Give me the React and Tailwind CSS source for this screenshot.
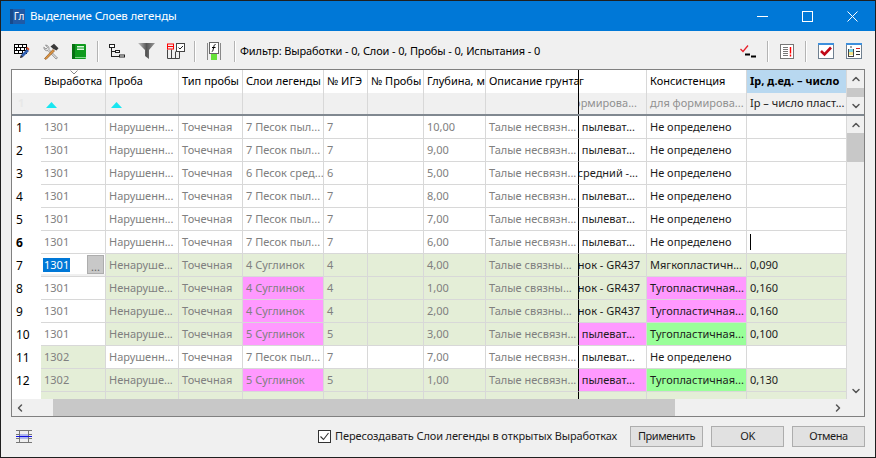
import { ChevronUp, ChevronDown, ChevronLeft, ChevronRight } from "lucide-react";

const font = "font-['Noto_Sans',sans-serif]";

const colWidths = [
  "w-[65px]",
  "w-[73px]",
  "w-[64px]",
  "w-[81px]",
  "w-[44px]",
  "w-[56px]",
  "w-[62px]",
  "w-[93px]",
  "w-[68px]",
  "w-[100px]",
  "w-[100px]",
];

const headers = [
  "Выработка",
  "Проба",
  "Тип пробы",
  "Слои легенды",
  "№ ИГЭ",
  "№ Пробы",
  "Глубина, м",
  "Описание грунта",
  "г",
  "Консистенция",
  "Ip, д.ед. – число",
];

const W = "bg-white";
const G = "bg-[#e4eed7]";
const P = "bg-[#ff99ff]";
const L = "bg-[#99ff99]";

const sand = "Нарушенн...";
const solid = "Ненаруше...";
const none = "Не определено";
const hard = "Тугопластичная...";
const melt = "Талые несвязн...";
const tied = "Талые связны...";
const dust = "Песок пылеват...";
const mid = "Песок средний -...";
const gr = "Суглинок - GR437";

const clipPad = (text) => {
  if (text === gr) return "justify-end pr-[6px]";
  if (text === mid) return "justify-end pr-[8px]";
  return "justify-end pr-[11px]";
};

const rows = [
  { n: "1", cells: ["1301", sand, "Точечная", "7 Песок пыл...", "7", "", "10,00", melt, dust, none, ""] },
  { n: "2", cells: ["1301", sand, "Точечная", "7 Песок пыл...", "7", "", "9,00", melt, dust, none, ""] },
  { n: "3", cells: ["1301", sand, "Точечная", "6 Песок сред...", "6", "", "5,00", melt, mid, none, ""] },
  { n: "4", cells: ["1301", sand, "Точечная", "7 Песок пыл...", "7", "", "8,00", melt, dust, none, ""] },
  { n: "5", cells: ["1301", sand, "Точечная", "7 Песок пыл...", "7", "", "7,00", melt, dust, none, ""] },
  { n: "6", bold: true, caret: true, cells: ["1301", sand, "Точечная", "7 Песок пыл...", "7", "", "6,00", melt, dust, none, ""] },
  {
    n: "7",
    editor: true,
    bg: [W, G, G, G, G, G, G, G, G, G, G],
    cells: ["1301", solid, "Точечная", "4 Суглинок", "4", "", "4,00", tied, gr, "Мягкопластичн...", "0,090"],
  },
  {
    n: "8",
    bg: [W, G, G, P, G, G, G, G, G, P, G],
    cells: ["1301", solid, "Точечная", "4 Суглинок", "4", "", "1,00", tied, gr, hard, "0,160"],
  },
  {
    n: "9",
    bg: [W, G, G, P, G, G, G, G, G, P, G],
    cells: ["1301", solid, "Точечная", "4 Суглинок", "4", "", "2,00", tied, gr, hard, "0,160"],
  },
  {
    n: "10",
    bg: [W, G, G, P, G, G, G, G, P, L, G],
    cells: ["1301", solid, "Точечная", "5 Суглинок", "5", "", "3,00", melt, dust, hard, "0,100"],
  },
  {
    n: "11",
    bg: [G, W, W, W, W, W, W, W, W, W, W],
    cells: ["1302", sand, "Точечная", "7 Песок пыл...", "7", "", "7,00", melt, dust, none, ""],
  },
  {
    n: "12",
    bg: [G, G, G, P, G, G, G, G, P, L, G],
    cells: ["1302", solid, "Точечная", "5 Суглинок", "5", "", "1,00", melt, dust, hard, "0,130"],
  },
];

const Separator = () => <div className="w-[2px] h-[21px] bg-[#b4b4b4] border-r border-white" />;

const BrickPencilIcon = () => (
  <svg width="16" height="16" viewBox="0 0 16 16">
    <rect x="0.5" y="1.5" width="12" height="9" fill="#fff" stroke="#000" />
    <path d="M1 4.5h11M1 7.5h11M4.5 2v2.5M8.5 2v2.5M2.5 4.5v3M6.5 4.5v3M10.5 4.5v3M4.5 7.5v3M8.5 7.5v3" stroke="#000" />
    <path d="M6 15l1-3 6-6 2 2-6 6z" fill="#2f5fb0" />
    <path d="M12 5l1.5-1 2 2-1 1.5z" fill="#d84a2a" />
    <path d="M6 15l1-3 2 2z" fill="#3a2a20" />
  </svg>
);

const ToolsIcon = () => (
  <svg width="16" height="17" viewBox="0 0 16 17">
    <path d="M14.5 15L6 6.5C6.6 4.5 5 2 2.5 2L4.5 4.5 3 6 .8 4.2C.8 6.8 3 8.2 5 7.6L13 16z" fill="#e2e2e2" stroke="#777" strokeWidth="0.7" />
    <path d="M1.5 15.5L10 6.5l1.5 1.5L3 16.5z" fill="#e0963f" stroke="#8a5520" strokeWidth="0.7" />
    <path d="M7.5 3.5L11 0.8l4.5 4.5-2 2.2-2-1-1.5-.8z" fill="#3a3a3a" />
  </svg>
);

const BookIcon = () => (
  <svg width="14" height="15" viewBox="0 0 14 15">
    <rect x="0" y="0" width="14" height="15" rx="1" fill="#0f9a1e" />
    <rect x="0" y="0" width="3" height="15" fill="#067012" />
    <rect x="5" y="2" width="7" height="4" fill="#d8f7dc" />
    <path d="M5 4h7" stroke="#0f9a1e" />
    <rect x="3" y="13" width="11" height="1" fill="#7fd98a" />
  </svg>
);

const TreeIcon = () => (
  <svg width="16" height="14" viewBox="0 0 16 14" fill="none">
    <path d="M2.5 4v9M3 7.5h3.5M3 12.5h7.5" stroke="#222" />
    <rect x="0.5" y="0.5" width="5" height="3" fill="#fff" stroke="#222" />
    <rect x="6.5" y="6.5" width="4" height="2" fill="#fff" stroke="#222" />
    <rect x="10.5" y="11" width="5" height="2" fill="#fff" stroke="#222" />
  </svg>
);

const FunnelIcon = () => (
  <svg width="17" height="16" viewBox="0 0 17 16">
    <defs>
      <linearGradient id="funnel" x1="0" x2="1" y1="0" y2="0">
        <stop offset="0" stopColor="#c4c4c4" />
        <stop offset="0.5" stopColor="#555" />
        <stop offset="1" stopColor="#999" />
      </linearGradient>
    </defs>
    <path d="M0 0h17l-6 7v9l-4-3V7z" fill="url(#funnel)" />
  </svg>
);

const ColumnCheckIcon = () => (
  <svg width="18" height="16" viewBox="0 0 18 16" fill="none">
    <path d="M0.5 6.5v9M4.5 6.5v9M8.5 8.5v7M12.5 9v6.5M0.5 15.5h12" stroke="#444" />
    <rect x="9.5" y="0.5" width="8" height="8" fill="#fff" stroke="#444" />
    <path d="M11.5 4.5l1.5 1.5 3-3" stroke="#222" />
    <rect x="0.5" y="1" width="6" height="5" stroke="#f00" />
    <path d="M0 3.5h7" stroke="#f00" />
  </svg>
);

const FormulaIcon = () => (
  <svg width="14" height="19" viewBox="0 0 14 19" fill="none">
    <path d="M0.5 1v17M13.5 1v17" stroke="#888" />
    <rect x="2.5" y="0.5" width="9" height="11" fill="#fff" stroke="#666" />
    <path d="M8.5 2.5C7 2.5 7 4 6.5 6S6 9.5 4.8 9.5M5 5.5h3.5" stroke="#000" />
    <rect x="4" y="12" width="6" height="6" fill="#66e23a" />
  </svg>
);

const CheckDashIcon = () => (
  <svg width="17" height="15" viewBox="0 0 17 15" fill="none">
    <path d="M0.5 5l2.5 2.5L8 1.5" stroke="#e8202a" strokeWidth="1.3" />
    <path d="M5 10.5h5M11 12.5h5" stroke="#000" strokeWidth="2" />
  </svg>
);

const ListAlertIcon = () => (
  <svg width="14" height="15" viewBox="0 0 14 15" fill="none">
    <rect x="0.5" y="0.5" width="13" height="14" fill="#fff" stroke="#777" />
    <path d="M3 3.5h5M3 5.5h5M3 7.5h5M3 9.5h5M3 11.5h5" stroke="#777" />
    <path d="M10.5 3v6.5M10.5 10.5v2" stroke="#f00" strokeWidth="1.4" />
  </svg>
);

const RedCheckIcon = () => (
  <svg width="16" height="16" viewBox="0 0 16 16" fill="none">
    <rect x="0.5" y="0.5" width="15" height="15" fill="#fff" stroke="#708090" />
    <rect x="0" y="0" width="16" height="2" fill="#3d8fdc" />
    <path d="M3 8l3.5 3.5L13 4.5" stroke="#c00818" strokeWidth="2.6" />
  </svg>
);

const PropertiesIcon = () => (
  <svg width="16" height="16" viewBox="0 0 16 16" fill="none">
    <rect x="0.5" y="0.5" width="15" height="15" fill="#fff" stroke="#708090" />
    <rect x="0" y="0" width="16" height="2" fill="#3d8fdc" />
    <rect x="3" y="6" width="4" height="3" fill="#7fd4ea" />
    <rect x="3" y="9" width="4" height="3" fill="#f4e68a" />
    <path d="M2.5 6v7M7.5 6v7M2 13.5h6M4 4h2" stroke="#444" />
    <path d="M10 5.5h4" stroke="#d02020" />
    <path d="M10 8.5h4M10 11.5h4" stroke="#333" />
  </svg>
);

const RowLineIcon = () => (
  <svg width="16" height="13" viewBox="0 0 16 13" fill="none">
    <rect x="3" y="4" width="10" height="5" fill="#b0b8f0" />
    <path d="M0 0.5h16M0 12.5h16M3.5 0v13M12.5 0v13M0 4.5h3M13 4.5h3M0 8.5h3M13 8.5h3" stroke="#777" />
    <path d="M0 6.5h16" stroke="#1010e0" />
  </svg>
);

const Chevron = ({ Icon }) => <Icon size={12} strokeWidth={3} className="text-[#555]" />;

const Cell = ({ width, bg, last, clip, gray, children }) => (
  <div
    className={`${width} h-full shrink-0 flex items-center overflow-hidden border-b border-[#d8d8d8] ${bg} ${
      last ? "border-r border-r-black" : "border-r border-r-[#d8d8d8]"
    } ${clip || "pl-[3px]"} ${gray ? "text-[#808080]" : "text-[#1c1c1c]"}`}
  >
    <span className="whitespace-nowrap shrink-0">{children}</span>
  </div>
);

const Editor = () => (
  <div className="w-[65px] h-full shrink-0 flex flex-col border-r border-b border-[#d8d8d8] bg-white">
    <div className="flex items-center h-[20px] pl-[2px] pt-[1px]">
      <span className="bg-[#0078d7] text-white leading-[14px] px-px">1301</span>
      <div className="ml-auto mr-[1px] w-[17px] h-[19px] bg-[#c8c8c8] border border-[#adadad] flex items-center justify-center text-[#666] leading-none pt-[3px]">
        ...
      </div>
    </div>
    <div className="flex-1 bg-[#f0f0f0]" />
  </div>
);

const Row = ({ row }) => (
  <div className="flex h-[23px]">
    <div className={`w-[29px] shrink-0 flex items-center pl-[4px] text-black bg-white text-[12px] ${row.bold ? "font-bold" : ""}`}>
      {row.n}
    </div>
    {row.cells.map((text, i) =>
      row.editor && i === 0 ? (
        <Editor key={i} />
      ) : (
        <Cell
          key={i}
          width={colWidths[i]}
          bg={row.bg ? row.bg[i] : W}
          last={i === 7}
          clip={i === 8 ? clipPad(text) : ""}
          gray={i < 8}
        >
          {row.caret && i === 10 ? <span className="block w-px h-[16px] bg-black" /> : text}
        </Cell>
      )
    )}
  </div>
);

const filterRow = ["", "", "", "", "", "", "", "", "формирова...", "для формирова...", "Ip – число пласт..."];

const App = () => {
  return (
    <div className={`w-[876px] h-[458px] flex flex-col bg-[#f0f0f0] border border-[#1f1f1f] text-[11px] ${font}`}>
      <div className="h-[30px] shrink-0 bg-[#0078d7] flex items-center text-white">
        <div className="w-[15px] h-[15px] ml-[9px] bg-[#1f5aa6] border-l-[3px] border-[#174a8c] flex items-center justify-center text-[10px] leading-none">
          Гл
        </div>
        <span className="ml-[5px] text-[11.5px] tracking-[-0.15px]">Выделение Слоев легенды</span>
        <div className="ml-auto flex items-center pr-[17px] gap-[34px]">
          <svg width="11" height="11" viewBox="0 0 11 11" fill="none">
            <path d="M0 5.5h11" stroke="#fff" />
          </svg>
          <svg width="11" height="11" viewBox="0 0 11 11" fill="none">
            <rect x="0.5" y="0.5" width="10" height="10" stroke="#fff" />
          </svg>
          <svg width="11" height="11" viewBox="0 0 11 11" fill="none">
            <path d="M0.5 0.5l10 10M10.5 0.5l-10 10" stroke="#fff" />
          </svg>
        </div>
      </div>

      <div className="h-[38px] shrink-0 flex items-center pt-[2px] pl-[13px] pr-[13px] text-black">
        <BrickPencilIcon />
        <div className="ml-[13px]"><ToolsIcon /></div>
        <div className="ml-[13px]"><BookIcon /></div>
        <div className="ml-[11px]"><Separator /></div>
        <div className="ml-[10px]"><TreeIcon /></div>
        <div className="ml-[13px]"><FunnelIcon /></div>
        <div className="ml-[12px]"><ColumnCheckIcon /></div>
        <div className="ml-[9px]"><Separator /></div>
        <div className="ml-[11px]"><FormulaIcon /></div>
        <div className="ml-[13px]"><Separator /></div>
        <span className="ml-[4px] whitespace-nowrap tracking-[-0.12px]">Фильтр: Выработки - 0, Слои - 0, Пробы - 0, Испытания - 0</span>
        <div className="ml-auto"><CheckDashIcon /></div>
        <div className="ml-[10px]"><Separator /></div>
        <div className="ml-[11px]"><ListAlertIcon /></div>
        <div className="ml-[11px]"><Separator /></div>
        <div className="ml-[11px]"><RedCheckIcon /></div>
        <div className="ml-[12px]"><PropertiesIcon /></div>
      </div>

      <div className="mx-[10px] h-[348px] shrink-0 border border-[#808080] flex flex-col bg-white">
        <div className="flex h-[46px] shrink-0 border-b-2 border-[#808890]">
          <div className="flex-1 flex flex-col">
            <div className="flex h-[23px]">
              <div className="w-[29px] shrink-0" />
              {headers.map((h, i) => (
                <div
                  key={h}
                  className={`${colWidths[i]} relative shrink-0 flex items-center overflow-hidden whitespace-nowrap border-r ${
                    i === 8 ? "" : "pl-[3px]"
                  } ${i === 7 ? "border-r-black" : "border-r-[#d8d8d8]"} ${
                    i === 10 ? "bg-[#b8d8f0] font-bold text-black" : "text-black"
                  }`}
                >
                  {h}
                  {i === 0 && (
                    <svg width="8" height="5" viewBox="0 0 8 5" fill="none" className="absolute left-[29px] top-0">
                      <path d="M0.5 0.5L4 4l3.5-3.5" stroke="#888" />
                    </svg>
                  )}
                </div>
              ))}
            </div>
            <div className="flex h-[21px] bg-[#f0f0f0]">
              <div className="w-[29px] shrink-0 flex items-center pl-[6px] text-[#e8e8e8] font-bold">1</div>
              {filterRow.map((f, i) => (
                <div
                  key={i}
                  className={`${colWidths[i]} shrink-0 flex items-center overflow-hidden whitespace-nowrap border-r ${
                    i === 7 ? "border-r-black" : "border-r-[#d8d8d8]"
                  } ${i === 8 ? "justify-end pr-[9px] text-[#909090]" : "pl-[3px]"} ${i === 9 ? "text-[#909090]" : "text-[#1c1c1c]"}`}
                >
                  {i < 2 ? (
                    <svg width="11" height="6" viewBox="0 0 11 6" className="ml-[2px] mt-[3px]">
                      <path d="M5.5 0L11 6H0z" fill="#19e6f0" />
                    </svg>
                  ) : (
                    <span className="shrink-0">{f}</span>
                  )}
                </div>
              ))}
            </div>
          </div>
          <div className="w-[17px] shrink-0 flex flex-col items-center bg-[#f0f0f0]">
            <div className="h-[17px] flex items-center mt-[1px]"><Chevron Icon={ChevronUp} /></div>
            <div className="w-full h-[10px] bg-[#c8c8c8]" />
            <div className="mt-auto h-[17px] flex items-center"><Chevron Icon={ChevronDown} /></div>
          </div>
        </div>

        <div className="flex h-[283px] shrink-0">
          <div className="flex-1 overflow-hidden">
            {rows.map((row) => (
              <Row key={row.n} row={row} />
            ))}
            <div className="flex h-[7px]">
              <div className="w-[29px] shrink-0 bg-white" />
              {colWidths.map((w, i) => (
                <div key={w + i} className={`${w} shrink-0 ${G} border-r ${i === 7 ? "border-r-black" : "border-r-[#d8d8d8]"}`} />
              ))}
            </div>
          </div>
          <div className="w-[17px] shrink-0 flex flex-col items-center bg-[#f0f0f0]">
            <div className="h-[17px] flex items-center"><Chevron Icon={ChevronUp} /></div>
            <div className="w-full h-[29px] bg-[#c8c8c8]" />
            <div className="mt-auto h-[17px] flex items-center"><Chevron Icon={ChevronDown} /></div>
          </div>
        </div>

        <div className="h-[17px] shrink-0 flex items-center bg-[#f0f0f0]">
          <div className="w-[41px] flex items-center pl-[2px]"><Chevron Icon={ChevronLeft} /></div>
          <div className="w-[622px] h-full bg-[#c8c8c8]" />
          <div className="w-[172px] flex justify-end pr-[3px]"><Chevron Icon={ChevronRight} /></div>
        </div>
      </div>

      <div className="flex-1 flex items-center pb-[2px] pl-[15px] pr-[10px] text-[#1c1c1c]">
        <RowLineIcon />
        <div className="ml-auto flex items-center">
          <div className="w-[13px] h-[13px] border border-[#333] bg-white flex items-center justify-center">
            <svg width="11" height="11" viewBox="0 0 11 11" fill="none">
              <path d="M1.5 5.5l3 3 5-6.5" stroke="#333" strokeWidth="1.1" />
            </svg>
          </div>
          <span className="ml-[4px] whitespace-nowrap tracking-[-0.12px]">Пересоздавать Слои легенды в открытых Выработках</span>
        </div>
        <div className="ml-[13px] flex gap-[8px]">
          {["Применить", "OK", "Отмена"].map((label) => (
            <button
              key={label}
              className="w-[73px] h-[21px] bg-[#e1e1e1] border border-[#adadad] flex items-center justify-center tracking-[-0.4px]"
            >
              {label}
            </button>
          ))}
        </div>
      </div>
    </div>
  );
};

export default App;
